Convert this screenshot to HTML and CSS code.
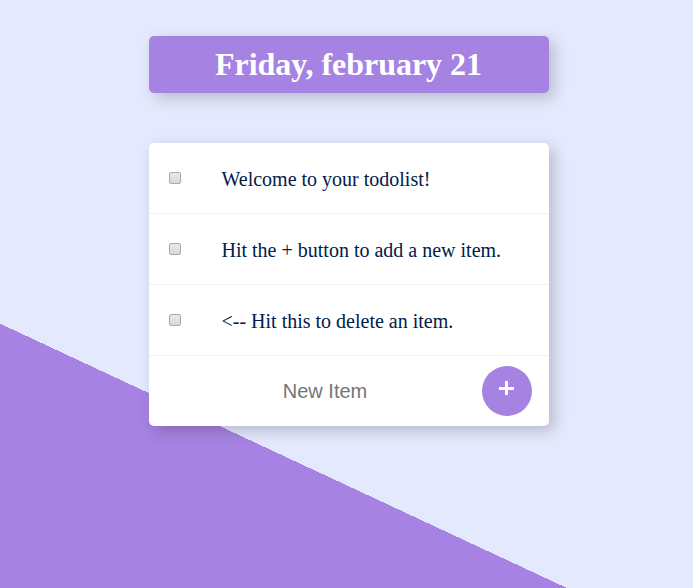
FILE: index.html
```html
<!DOCTYPE html>
<html lang="en">
<head>
<meta charset="utf-8">
<title>Todolist</title>
<link rel="stylesheet" href="styles.css">
</head>
<body>
<header class="box heading"><h1>Friday, february 21</h1></header>
<main class="box">
<div class="item"><input type="checkbox"><p>Welcome to your todolist!</p></div>
<div class="item"><input type="checkbox"><p>Hit the + button to add a new item.</p></div>
<div class="item"><input type="checkbox"><p>&lt;-- Hit this to delete an item.</p></div>
<form class="entry">
<input class="new-item" type="text" placeholder="New Item">
<button type="button" aria-label="Add item"><svg width="16" height="16" viewBox="0 0 16 16"><path d="M7.5 0v14M0 7.5h15"/></svg></button>
</form>
</main>
</body>
</html>
```
FILE: styles.css
```css
* { box-sizing: border-box; }
html { height: 100%; }
body {
  margin: 0;
  min-height: 100%;
  padding-top: 36px;
  padding-left: 5px;
  background: linear-gradient(205deg, #e4e9fd 586.2px, #a683e3 586.2px) no-repeat;
  font-family: "Liberation Serif", serif;
}
.box {
  width: 400px;
  margin: 0 auto 50px;
  background: #fff;
  border-radius: 5px;
  box-shadow: 5px 5px 15px rgba(0, 0, 0, 0.2);
}
main.box { margin-bottom: 0; }
.heading {
  height: 57px;
  background: #a683e3;
  text-align: center;
}
h1 {
  margin: 0;
  padding-right: 1px;
  color: #fff;
  font-size: 32px;
  letter-spacing: -0.03px;
  line-height: 57px;
}
.item {
  display: flex;
  align-items: center;
  height: 71px;
  border-bottom: 1px solid #f1f1f1;
}
.item input {
  appearance: none;
  width: 12px;
  height: 12px;
  margin: 0 40.5px 0 20px;
  border: 1px solid #a9a9a9;
  border-radius: 2px;
  background: linear-gradient(#e9e9e9, #d9d9d9);
}
.item p { margin: 0; padding-top: 2px; color: #00204a; font-size: 20px; line-height: 23px; }
.entry { display: flex; align-items: center; height: 70px; }
.new-item {
  width: 333px;
  height: 60px;
  padding: 0 0 0 19px;
  border: 0;
  background: transparent;
  font: 20px "Liberation Sans", sans-serif;
  text-align: center;
}
.new-item::placeholder { color: #757575; }
button {
  display: grid;
  place-items: center;
  width: 50px;
  height: 50px;
  padding: 0 0 5px;
  border: 0;
  border-radius: 50%;
  background: #a683e3;
}
button path { stroke: #fff; stroke-width: 3; }
```
